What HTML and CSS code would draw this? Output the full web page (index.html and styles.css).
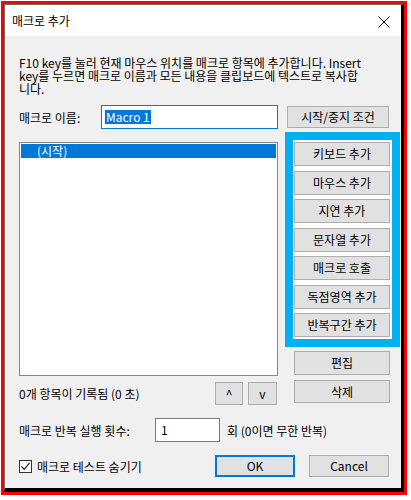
FILE: index.html
```html
<!DOCTYPE html>
<html>
	<head>
		<title>매크로 추가</title>
		<meta charset="utf-8">
		<meta name="viewport" content="width=device-width, initial-scale=1.0">
		<link rel="stylesheet" href="styles.css">
	</head>
	<body>
		<div class="frame">
			<div class="window">
				<div class="titlebar">
					<span class="title">매크로 추가</span>
					<svg class="close" width="12" height="12" viewBox="0 0 12 12">
						<path d="M0.5 0.5 L11.5 11.5 M11.5 0.5 L0.5 11.5" stroke="#000" stroke-width="1" fill="none"/>
					</svg>
				</div>

				<div class="dialog">
					<p class="info">F10 key를 눌러 현재 마우스 위치를 매크로 항목에 추가합니다. Insert<br>key를 누르면 매크로 이름과 모든 내용을 클립보드에 텍스트로 복사합<br>니다.</p>

					<div class="name-row">
						<span class="name-label">매크로 이름:</span>
						<div class="text-input name-input"><span class="selected-text">Macro 1</span></div>
						<button class="btn cond-btn">시작/중지 조건</button>
					</div>

					<div class="main">
						<div class="left-col">
							<div class="listbox">
								<div class="list-item active">(시작)</div>
							</div>
							<div class="status-row">
								<span class="status">0개 항목이 기록됨 (0 초)</span>
								<button class="btn arrow-btn up-btn">^</button>
								<button class="btn arrow-btn down-btn">v</button>
							</div>
						</div>

						<div class="right-col">
							<div class="highlight">
								<div class="add-buttons">
									<button class="btn add-btn">키보드 추가</button>
									<button class="btn add-btn">마우스 추가</button>
									<button class="btn add-btn">지연 추가</button>
									<button class="btn add-btn">문자열 추가</button>
									<button class="btn add-btn">매크로 호출</button>
									<button class="btn add-btn">독점영역 추가</button>
									<button class="btn add-btn">반복구간 추가</button>
								</div>
							</div>
							<button class="btn side-btn edit-btn">편집</button>
							<button class="btn side-btn delete-btn">삭제</button>
						</div>
					</div>

					<div class="repeat-row">
						<span class="repeat-label">매크로 반복 실행 횟수:</span>
						<div class="text-input repeat-input">1</div>
						<span class="repeat-suffix">회 (0이면 무한 반복)</span>
					</div>

					<div class="bottom-row">
						<label class="check">
							<span class="check-box">
								<svg width="11" height="11" viewBox="0 0 11 11">
									<path d="M1.5 5.5 L4.2 8.3 L9.6 1.8" stroke="#222" stroke-width="1.2" fill="none"/>
								</svg>
							</span>
							<span class="check-text">매크로 테스트 숨기기</span>
						</label>
						<button class="btn ok-btn">OK</button>
						<button class="btn cancel-btn">Cancel</button>
					</div>
				</div>
			</div>
		</div>
	</body>
</html>
```

FILE: styles.css
```css
body {
  margin: 0px;
  background-color: #ffffff;
  font-family: 'Noto Sans CJK KR', 'Noto Sans', sans-serif;
  font-size: 12px;
  color: #000000;
}

.frame{
  margin: 1px 0 0 1px;
  width: 400px;
  border: 3px solid #ff0000;
}

.window{
  border-left: 1px solid #6d6d6d;
  border-top: 1px solid #6d6d6d;
  border-right: 3px solid #000000;
  border-bottom: 4px solid #000000;
}

.titlebar{
  height: 31px;
  background-color: #ffffff;
  display: flex;
  align-items: center;
  padding-left: 7px;
  padding-right: 11px;
}

.title{
  flex: 1;
  font-size: 12px;
  line-height: 14px;
}

.close{
  margin-top: 3px;
}

.dialog{
  background-color: #f0f0f0;
  padding: 20px 1px 11px 14px;
}

.info{
  margin: 0;
  line-height: 13px;
  white-space: nowrap;
}

.btn{
  font-family: 'Noto Sans CJK KR', 'Noto Sans', sans-serif;
  font-size: 12px;
  color: #000000;
  background-color: #e1e1e1;
  border: 1px solid #adadad;
  padding: 0;
  margin: 0;
  box-sizing: border-box;
  line-height: 12px;
}

.text-input{
  box-sizing: border-box;
  background-color: #ffffff;
  border: 1px solid #7a7a7a;
  display: flex;
  align-items: center;
  line-height: 14px;
}

.name-row{
  margin-top: 10px;
  height: 24px;
  display: flex;
  align-items: center;
}

.name-label{
  width: 82px;
}

.name-input{
  width: 177px;
  height: 24px;
  border-color: #0078d7;
  padding-left: 3px;
}

.selected-text{
  background-color: #0078d7;
  color: #ffffff;
  padding: 0 1px;
}

.cond-btn{
  margin-left: 9px;
  width: 102px;
  height: 22px;
}

.main{
  margin-top: 3px;
  display: flex;
}

.left-col{
  width: 259px;
  margin-right: 7px;
}

.listbox{
  margin-top: 10px;
  height: 234px;
  box-sizing: border-box;
  border: 1px solid #828790;
  background-color: #ffffff;
  padding: 1px;
}

.list-item{
  height: 14px;
  line-height: 14px;
  padding-left: 16px;
}

.list-item.active{
  background-color: #0078d7;
  color: #ffffff;
}

.status-row{
  margin-top: 6px;
  height: 23px;
  display: flex;
  align-items: center;
  padding-right: 1px;
}

.status{
  flex: 1;
}

.arrow-btn{
  height: 23px;
  width: 28px;
}

.down-btn{
  width: 29px;
  margin-left: 5px;
}

.right-col{
  width: 115px;
}

.highlight{
  border: 8px solid #00b0f0;
  background-color: #ffffff;
  padding: 2px 1px;
}

.add-buttons{
  display: flex;
  flex-direction: column;
  gap: 4.5px;
}

.add-btn{
  width: 96px;
  height: 24px;
}

.side-btn{
  display: block;
  margin-left: 9px;
  width: 96px;
}

.edit-btn{
  margin-top: 4px;
  height: 24px;
}

.delete-btn{
  margin-top: 5px;
  height: 23px;
}

.repeat-row{
  margin-top: 13px;
  height: 24px;
  display: flex;
  align-items: center;
}

.repeat-label{
  width: 136px;
}

.repeat-input{
  width: 65px;
  height: 24px;
  padding-left: 5px;
}

.repeat-suffix{
  margin-left: 7px;
}

.bottom-row{
  margin-top: 13px;
  height: 22px;
  display: flex;
  align-items: center;
  padding-right: 11px;
}

.check{
  flex: 1;
  display: flex;
  align-items: center;
}

.check-box{
  width: 13px;
  height: 13px;
  box-sizing: border-box;
  border: 1px solid #333333;
  background-color: #ffffff;
  display: flex;
  align-items: center;
  justify-content: center;
}

.check-text{
  margin-left: 5px;
}

.ok-btn{
  width: 80px;
  height: 22px;
  border: 2px solid #0078d7;
}

.cancel-btn{
  margin-left: 14px;
  width: 80px;
  height: 22px;
}
```
